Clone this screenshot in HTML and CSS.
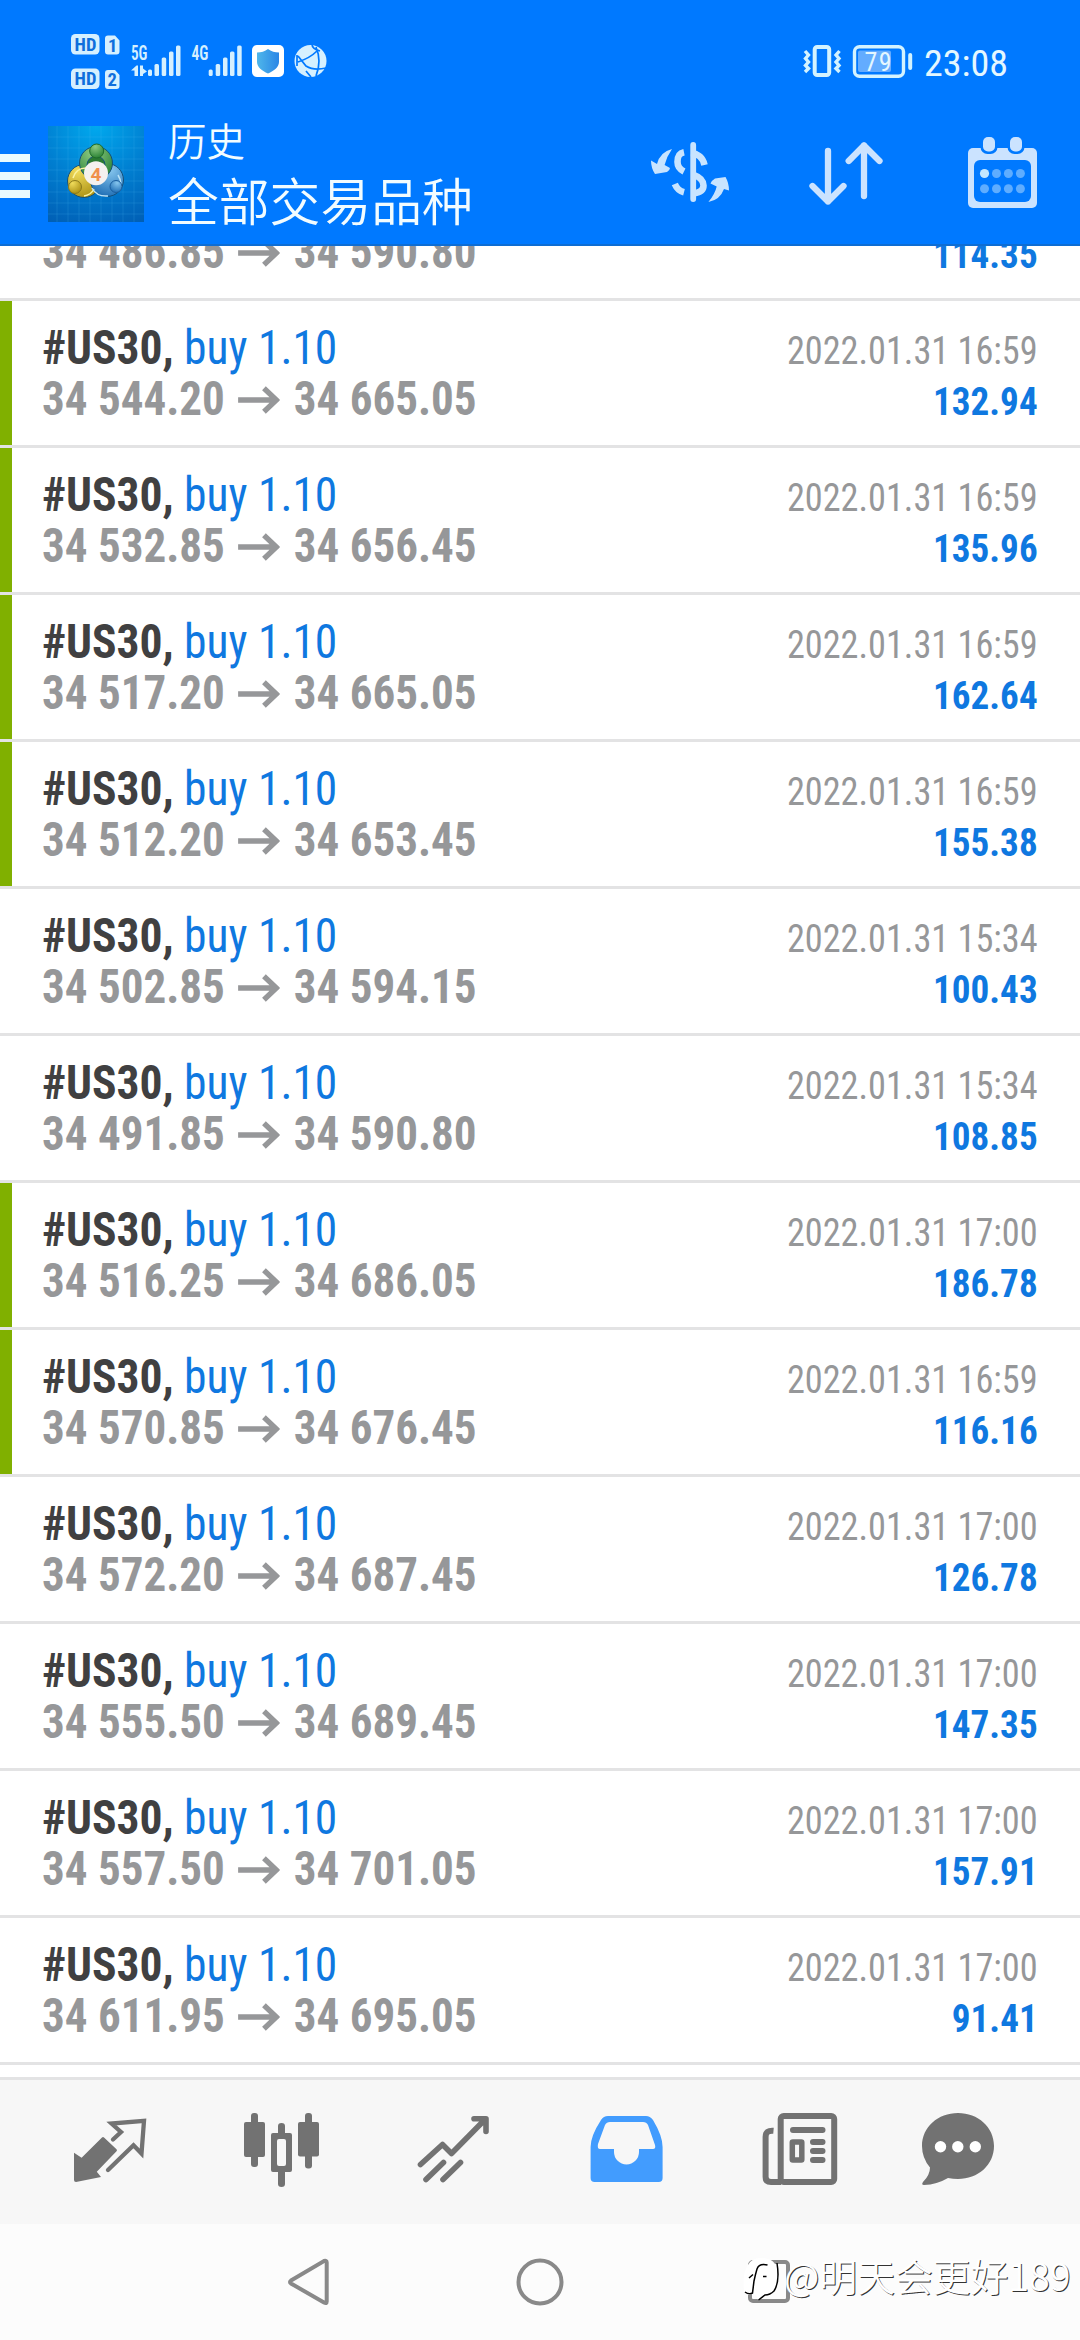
FILE: index.html
```
<!DOCTYPE html>
<html lang="zh">
<head>
<meta charset="utf-8">
<title>历史</title>
<link rel="stylesheet" href="styles.css">
</head>
<body>
<svg width="0" height="0" class="defs">
  <symbol id="arrow" viewBox="0 0 42 28" preserveAspectRatio="none"><path d="M0 14H38M26 2.200L38.500 14L26 25.800" fill="none" stroke="#969799" stroke-width="5.400"/></symbol>
</svg>
<header class="header">
  <div class="status">
    <svg width="256" height="60" viewBox="71 32 256 60" fill="#d5f0ff">
      <rect x="71" y="34" width="28.500" height="20.500" rx="4.500"/>
      <path d="M108 35.500h7l4.500 5v11a3 3 0 0 1-3 3h-8.500a3 3 0 0 1-3-3v-13a3 3 0 0 1 3-3z"/>
      <rect x="71" y="68.500" width="28.500" height="20.500" rx="4.500"/>
      <path d="M108 70h7l4.500 5v11a3 3 0 0 1-3 3h-8.500a3 3 0 0 1-3-3v-13a3 3 0 0 1 3-3z"/>
      <g class="chip">
        <text x="74.500" y="50.800" textLength="22">HD</text><text x="108" y="51.500">1</text>
        <text x="74.500" y="85.300" textLength="22">HD</text><text x="107.500" y="86">2</text>
      </g>
      <g class="net"><text x="131" y="59.700" textLength="16.500" lengthAdjust="spacingAndGlyphs">5G</text><text x="191.500" y="59.700" textLength="17" lengthAdjust="spacingAndGlyphs">4G</text></g>
      <path d="M131 70.500L136.500 65.500H138V76H134.500V70.500ZM140 65.500H143V68.500L147 71.500L143 74V76H140Z"/>
      <g>
        <rect x="148" y="69.500" width="4" height="6.500" rx="1.500"/><rect x="154.500" y="64" width="4.500" height="12" rx="1.500"/><rect x="161.700" y="57.500" width="4.500" height="18.500" rx="1.500"/><rect x="169" y="51.500" width="4.500" height="24.500" rx="1.500"/><rect x="176" y="45.500" width="4.500" height="30.500" rx="1.500"/>
        <rect x="208.700" y="69.500" width="4" height="6.500" rx="1.500"/><rect x="215.700" y="64" width="4.500" height="12" rx="1.500"/><rect x="223" y="57.500" width="4.500" height="18.500" rx="1.500"/><rect x="230" y="51.500" width="4.500" height="24.500" rx="1.500"/><rect x="237.200" y="45.500" width="4.500" height="30.500" rx="1.500"/>
      </g>
      <rect x="252" y="45" width="32" height="32" rx="5" fill="#fff"/>
      <linearGradient id="sh"><stop offset="0" stop-color="#4fb6ea"/><stop offset="1" stop-color="#2a86e6"/></linearGradient>
      <path d="M268 49C271 51.500 275 52.500 279 52.500V62C279 67 274 71 268 73.500C262 71 257 67 257 62V52.500C261 52.500 265 51.500 268 49Z" fill="url(#sh)"/>
      <circle cx="310.500" cy="61" r="16"/>
      <path d="M312 44Q312 49 320 51M316 47Q322 61 316 76M298 56L306 66Q314 71 326 68M298 62Q310 58 317 51M297 55L297 66M306 71L311 77" fill="none" stroke="#0079ff" stroke-width="1.700"/>
    </svg>
    <svg width="206" height="40" viewBox="802 41 206 40" fill="none" stroke="#d3f3ff">
      <rect x="814.700" y="47" width="14.500" height="28" rx="2.500" stroke-width="4"/>
      <path d="M805 51l3.500 4l-3 3.500l3 3.500l-3 3.500l3 3l-3.500 3.500M839.500 51l-3.500 4l3 3.500l-3 3.500l3 3.500l-3 3l3.500 3.500" stroke-width="3.400"/>
      <rect x="854.500" y="46.700" width="49" height="29.500" rx="5" stroke-width="3.400"/>
      <rect x="858" y="50.500" width="33" height="21.500" rx="2" fill="#63acff" stroke="none"/>
      <rect x="908.200" y="53" width="4" height="17" rx="2" fill="#d3f3ff" stroke="none"/>
      <g fill="#e4f7ff" stroke="none" class="digits"><text x="864.500" y="70.700" font-size="26" textLength="27">79</text><text x="924" y="75.500" font-size="36" textLength="84" lengthAdjust="spacingAndGlyphs">23:08</text></g>
    </svg>
  </div>
  <div class="bar">
    <div class="menu"><i></i><i></i><i></i></div>
    <svg class="logo" width="96" height="96" viewBox="48 126 96 96">
      <defs>
        <radialGradient id="bg" cx=".5" cy="0" r="1.100"><stop offset="0" stop-color="#00a9ee"/><stop offset=".5" stop-color="#0080d2"/><stop offset="1" stop-color="#005fb5"/></radialGradient>
        <radialGradient id="gr" cx=".4" cy=".2" r=".9"><stop offset="0" stop-color="#8fcb84"/><stop offset="1" stop-color="#1f7a2c"/></radialGradient>
        <radialGradient id="ye" cx=".3" cy=".2" r=".9"><stop offset="0" stop-color="#f0dc5c"/><stop offset="1" stop-color="#a88d10"/></radialGradient>
        <radialGradient id="bl" cx=".6" cy=".2" r=".9"><stop offset="0" stop-color="#86c6ee"/><stop offset="1" stop-color="#1767b0"/></radialGradient>
      </defs>
      <rect x="48" y="126" width="96" height="96" fill="url(#bg)"/>
      <path d="M57 126v96M68 126v96M79 126v96M90 126v96M101 126v96M112 126v96M123 126v96M134 126v96M48 137h96M48 148h96M48 159h96M48 170h96M48 181h96M48 192h96M48 203h96M48 214h96" stroke="#4fc2f5" stroke-opacity=".18" fill="none"/>
      <g stroke="#14507a" stroke-width="1">
        <circle cx="84" cy="181" r="16.500" fill="url(#ye)"/><circle cx="107" cy="180" r="16.500" fill="url(#bl)"/><circle cx="96" cy="163" r="16.500" fill="url(#gr)"/>
        <circle cx="96" cy="165" r="9" fill="#2b7a32"/>
      </g>
      <path d="M73 178Q76 168 86 168M84 196Q91 195 94 189" stroke="#faf2a0" stroke-width="1.500" fill="none"/>
      <path d="M92 188Q97 197 108 196M118 175Q121 180 121 184" stroke="#b9e3fa" stroke-width="1.500" fill="none"/>
      <circle cx="96.700" cy="151" r="7" fill="url(#gr)" stroke="#1f6b2a"/><circle cx="75" cy="187" r="6.500" fill="url(#ye)" stroke="#8a7a1c"/><circle cx="116" cy="186.500" r="6" fill="url(#bl)" stroke="#1b5f9f"/>
      <circle cx="96" cy="173.300" r="12" fill="#f4f1ef"/>
      <text x="90.500" y="180.500" class="four">4</text>
    </svg>
    <div class="titles"><div class="t1">历史</div><div class="t2">全部交易品种</div></div>
    <svg class="dollar" width="80" height="64" viewBox="650 140 80 64" fill="#c8e4ff">
      <path d="M704.500 165C703 158 698 153.500 691 153M684 152.300C678 153.500 677.500 158 677.500 162C677.500 166 680 169.500 684 171.500M693 174.500C700 177 703.500 181 703.500 185.500C703.500 190 700 192.500 694 193.300M684 192.300C679 191 676.500 188 674.800 184" fill="none" stroke="#c8e4ff" stroke-width="6.600"/>
      <rect x="690.300" y="142" width="5.800" height="60" rx="2.900"/>
      <path d="M672 149Q660 152 657 164L651 160.500Q651 168 655 174L667 172Q670 170 670 168L664.600 165Q667 156 672 149ZM708.400 202Q720 200 724 189L729 190.500Q729 183 725.500 177L715 178.500Q711 181 710.500 183.500L716.700 186.500Q715 194 708.400 202Z"/>
    </svg>
    <svg class="sort" width="76" height="66" viewBox="808 140 76 66" fill="none" stroke="#cbe3ff" stroke-width="6.300" stroke-linecap="round" stroke-linejoin="round">
      <path d="M828 151V201.500M812.500 186L828 201.500L843.500 186M864 196V145.500M848.700 161L864 145.500L879.500 161"/>
    </svg>
    <svg width="70" height="72" viewBox="968 137 70 72" fill="#cbe3ff">
      <rect x="968" y="148" width="69" height="60" rx="5"/>
      <rect x="974" y="160" width="57" height="42" rx="6" fill="#0079ff"/>
      <rect x="980.500" y="134" width="17" height="20" rx="7" fill="#0079ff"/><rect x="1007.500" y="134" width="17" height="20" rx="7" fill="#0079ff"/>
      <rect x="983" y="137" width="12" height="14.500" rx="5"/><rect x="1010" y="137" width="12" height="14.500" rx="5"/>
      <g fill="#5fadff"><circle cx="996.500" cy="173.500" r="4.500"/><circle cx="1008.400" cy="173.500" r="4.500"/><circle cx="1020.400" cy="173.500" r="4.500"/><circle cx="984.500" cy="188.700" r="4.500"/><circle cx="996.500" cy="188.700" r="4.500"/><circle cx="1008.400" cy="188.700" r="4.500"/><circle cx="1020.400" cy="188.700" r="4.500"/></g>
      <circle cx="984.500" cy="173.500" r="4.600" fill="#c4e7ff"/>
    </svg>
  </div>
</header>
<main class="list"><div class="deals" id="deals"></div></main>
<nav class="tabs">
  <svg viewBox="72 2110 76 80"><path d="M74 2152.700L81.600 2157.700L102 2137.500Q103 2136.500 104 2137.500L116.500 2149.300Q117.500 2150.300 116.500 2151.300L96.800 2171.700L101 2177L76 2182Q74 2182 74 2180Z" stroke="none"/><path d="M113 2139.500L121 2132L111.500 2123.500L144 2120.800L141.500 2153.500L133.500 2145.300L108 2170" fill="none" stroke-width="4.300" stroke-linecap="round"/></svg>
  <svg viewBox="244 2110 76 80" stroke="none"><rect x="244" y="2122" width="21" height="35" rx="2"/><rect x="251" y="2113" width="7" height="54" rx="3"/><rect x="298" y="2122" width="21" height="34.500" rx="2"/><rect x="305" y="2113" width="7" height="55.500" rx="3"/><path fill-rule="evenodd" d="M273 2133h17q2 0 2 2v35q0 2-2 2h-17q-2 0-2-2v-35q0-2 2-2zM279 2139q-2 0-2 2v23q0 2 2 2h5q2 0 2-2v-23q0-2-2-2z"/><path d="M278 2133v-7q0-3 3.500-3t3.500 3v7zM278 2172v12q0 3 3.500 3t3.500-3v-12z"/></svg>
  <svg viewBox="416 2110 76 80" fill="none" stroke-width="5.600" stroke-linecap="round" stroke-linejoin="round"><path d="M420.500 2164.500L442.500 2144.500L451.500 2153.500L485.500 2119M474 2118.700H486V2131.500"/><path d="M426 2179.500L443.500 2162.500M443 2179.500L460.500 2162.500"/></svg>
  <svg viewBox="588 2110 76 80" stroke="none"><path fill="#429cfe" fill-rule="evenodd" d="M608 2116H646Q650 2116 653 2120Q662.600 2136 662.600 2147V2178Q662.600 2182 658.600 2182H594.600Q590.600 2182 590.600 2178V2147Q590.600 2136 601 2120Q603.500 2116 608 2116ZM610 2122Q606.500 2122 605 2125L598 2144Q597 2149 600 2149H614V2152A12.500 12.500 0 0 0 639 2152V2149H653Q656 2149 655 2145L648 2125Q646.500 2122 643 2122Z"/></svg>
  <svg viewBox="760 2110 80 80" fill="none" stroke-width="6"><rect x="780.700" y="2116" width="53.500" height="66" rx="3"/><path d="M773.500 2130.700Q765.600 2130 765.600 2137V2177Q765.600 2182 771 2182H781"/><path d="M793 2130H822.500M813 2142H822.500M813 2151H822.500M813 2160H822.500" stroke-linecap="round"/><rect x="792.300" y="2142" width="9.500" height="18" rx=".5" stroke-width="5.500"/></svg>
  <svg viewBox="920 2110 80 80" stroke="none"><path d="M958 2113C978 2113 994 2127 994 2146C994 2165 978 2179 958 2179Q953 2179 948 2178Q937 2184.500 924 2185Q921 2185 923 2182Q930 2175 930 2167.500Q922 2158 922 2146C922 2127 938 2113 958 2113Z"/><g fill="#fff"><circle cx="940.500" cy="2146.700" r="5.700"/><circle cx="957.800" cy="2146.700" r="5.700"/><circle cx="975.300" cy="2146.700" r="5.700"/></g></svg>
</nav>
<footer class="system">
  <svg width="44" height="52" viewBox="286 2256 44 52"><path d="M291 2280.500L324 2261Q326.700 2260 326.700 2262.500V2301.500Q326.700 2304 324 2302.500L291 2283.500Q289 2282 291 2280.500Z"/></svg>
  <svg width="52" height="52" viewBox="514 2256 52 52"><circle cx="540" cy="2282" r="21.500"/></svg>
  <svg width="46" height="52" viewBox="746 2256 46 52"><rect x="750" y="2262" width="38" height="39" rx="3"/></svg>
  <div class="mark">
    <svg width="42" height="44" viewBox="742 2260 42 44"><path d="M760 2261Q776 2260 777.500 2275Q778.500 2294 769 2297L758 2303Q757 2298 753 2297Q747 2300 744 2294Q742 2277 748 2268Q752 2261 760 2261Z" fill="#fff" stroke="none"/><path d="M777 2266Q780 2285 774 2294Q770 2298 765 2298L758.500 2303M767.500 2268Q759 2266 757 2272Q755.500 2277 754 2284L752.500 2296Q749 2298 745 2295M749 2281L753 2277.500M763 2279.500H766.500" fill="none" stroke="#000" stroke-width="1.500"/></svg>
    <span>@明天会更好189</span>
  </div>
</footer>
<script src="deals.js"></script>
</body>
</html>
```
FILE: deals.js
```
// open price, close price, close time, profit, take-profit hit
const deals = [
  ["34 486.85", "34 590.80", "15:34", "114.35", 0],
  ["34 544.20", "34 665.05", "16:59", "132.94", 1],
  ["34 532.85", "34 656.45", "16:59", "135.96", 1],
  ["34 517.20", "34 665.05", "16:59", "162.64", 1],
  ["34 512.20", "34 653.45", "16:59", "155.38", 1],
  ["34 502.85", "34 594.15", "15:34", "100.43", 0],
  ["34 491.85", "34 590.80", "15:34", "108.85", 0],
  ["34 516.25", "34 686.05", "17:00", "186.78", 1],
  ["34 570.85", "34 676.45", "16:59", "116.16", 1],
  ["34 572.20", "34 687.45", "17:00", "126.78", 0],
  ["34 555.50", "34 689.45", "17:00", "147.35", 0],
  ["34 557.50", "34 701.05", "17:00", "157.91", 0],
  ["34 611.95", "34 695.05", "17:00", "91.41", 0]
];
document.getElementById("deals").innerHTML = deals.map(([open, close, time, profit, hit]) => `
  <div class="row${hit ? " hit" : ""}">
    <div class="deal">
      <p class="name"><b>#US30,</b> <span>buy 1.10</span></p>
      <p class="price">${open}<svg><use href="#arrow"/></svg>${close}</p>
    </div>
    <div class="result"><p class="date">2022.01.31 ${time}</p><p class="profit">${profit}</p></div>
  </div>`).join("");
```
FILE: styles.css
```
* { box-sizing: border-box; }
body { margin: 0; width: 1080px; height: 2340px; display: flex; flex-direction: column; background: #fff; overflow: hidden; font-family: "Roboto Condensed", "Roboto", sans-serif; }
p { margin: 0; }
svg { display: block; flex: none; }
.defs { position: absolute; }

.header { height: 246px; flex: none; background: #0079ff; border-bottom: 2px solid #0e6dd3; }
.status { height: 122px; display: flex; justify-content: space-between; align-items: flex-start; padding: 32px 72px 0 71px; }
.status svg + svg { margin-top: 9px; }
.chip { fill: #0f6fdc; font: 700 18.500px "Roboto Condensed", sans-serif; }
.net { font: 600 19.500px "Roboto Condensed", sans-serif; }
.digits { font-family: "Roboto Condensed", sans-serif; }
.four { fill: #f0904d; font: 700 19px "Roboto", sans-serif; }

.bar { height: 122px; display: flex; align-items: flex-start; padding-right: 42px; }
.menu { width: 30px; padding-top: 32px; display: flex; flex-direction: column; gap: 10px; }
.menu i { height: 8px; background: #e9fbff; }
.logo { margin: 4px 24px 0 18px; }
.titles { flex: 1; color: #f2fcff; font-family: "Noto Sans CJK SC", sans-serif; font-weight: 350; white-space: nowrap; }
.t1 { font-size: 38.500px; line-height: 56px; margin-top: -11px; }
.t2 { font-size: 50.800px; line-height: 74px; margin-top: -5px; }
.dollar { margin: 18px 78px 0 0; }
.sort { margin: 18px 84px 0 0; }
.bar > svg:last-child { margin-top: 15px; }

.list { height: 1831px; flex: none; overflow: hidden; }
.deals { margin-top: -92px; }
.row { height: 147px; display: flex; justify-content: space-between; border-bottom: 3px solid #e3e3e4; padding: 0 42px; font-size: 48px; line-height: 51px; white-space: nowrap; }
.hit { background: linear-gradient(#80b000, #80b000) 0 0 / 12px 100% no-repeat; }
.deal { padding-top: 21px; }
.deal p { transform-origin: left; }
.name { transform: scaleX(.948); }
.deal b { color: #404041; }
.deal span { color: #0f78e0; }
.price { color: #969799; font-weight: 700; display: flex; align-items: center; transform: scaleX(.938); }
.price svg { width: 44.600px; height: 28px; margin: 2px 14.500px 0; }
.result { padding-top: 25px; font-size: 39px; text-align: right; color: #969799; }
.result p { transform-origin: right; }
.date { transform: scaleX(.93); }
.profit { color: #0f78e0; font-weight: 700; transform: scaleX(.952); }

.tabs { height: 147px; flex: none; background: #f7f7f7; border-top: 3px solid #e3e3e4; padding: 30px 80px 0 72px; display: flex; gap: 96px; fill: #727272; stroke: #727272; }
.tabs svg { height: 80px; width: 76px; }
.tabs svg:nth-child(n+5) { width: 80px; }
.tabs svg:last-child { margin-left: -16px; }

.system { position: relative; flex: 1; background: #fcfcfc; display: flex; gap: 180px; padding: 32px 288px 0 286px; }
.system > svg { fill: none; stroke: #898989; stroke-width: 4; }
.system > svg:first-child { margin-right: 4px; }
.mark { position: absolute; left: 742px; top: 30px; display: flex; align-items: center; height: 50px; }
.mark span { font: 350 37.800px/50px "Noto Sans CJK SC", sans-serif; color: #fff; text-shadow: 1px 1px 0 #333; white-space: nowrap; margin: -8px 0 0 0; }
```
